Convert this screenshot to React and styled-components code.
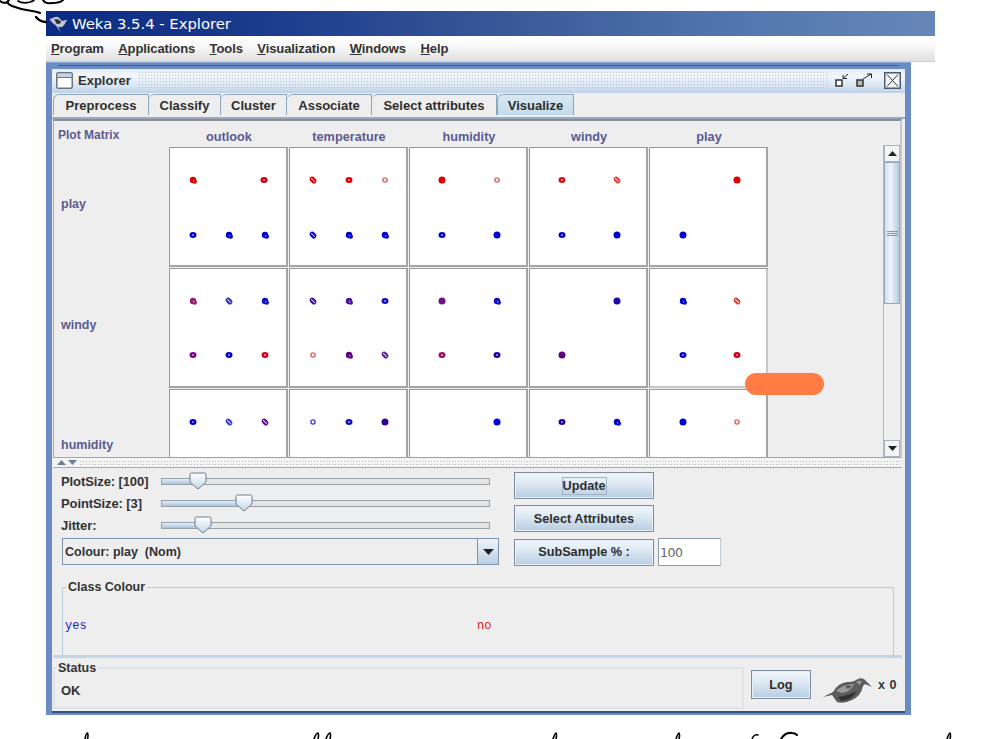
import React from "react";
import styled, { createGlobalStyle } from "styled-components";

const GlobalStyle = createGlobalStyle`
  html, body {
    margin: 0;
    background: #fff;
  }
  * {
    box-sizing: border-box;
  }
`;

const UI_FONT = `"Liberation Sans", Arial, sans-serif`;

const Page = styled.div`
  position: relative;
  width: 1002px;
  height: 739px;
  padding: 11px 0 0 46px;
  overflow: hidden;
  font: bold 13px ${UI_FONT};
  color: #333;
`;

const TitleBar = styled.div`
  display: flex;
  align-items: center;
  gap: 4px;
  width: 889px;
  height: 25px;
  padding-left: 3px;
  background: linear-gradient(to right, #0b2a84 0%, #1c3b8c 25%, #3c5c9a 55%, #4f74ac 75%, #6687b8 100%);
  color: #fff;
  font: 14.8px "DejaVu Sans", sans-serif;
`;

const MenuBar = styled.div`
  display: flex;
  gap: 14.5px;
  align-items: center;
  width: 889px;
  height: 26px;
  padding: 0 0 1px 5px;
  background: linear-gradient(to bottom, #fff 0%, #f8f8f8 40%, #e0e0e0 100%);
  border-bottom: 1px solid #d0d0d0;
  font-size: 13px;
  letter-spacing: -0.1px;
  span u {
    text-underline-offset: 1px;
  }
`;

const Frame = styled.div`
  width: 865px;
  height: 653px;
  padding: 6px 6px 3px 6px;
  background: #6a8bc3;
  border-top: 1px solid #8aa6d0;
  position: relative;
`;

const FrameLine = styled.div`
  height: 1px;
  margin: -4px 6px 3px 6px;
  background: #3f5c8c;
`;

const Inner = styled.div`
  width: 853px;
  height: 644px;
  background: #eee;
  border-bottom: 2px solid #33507e;
`;

const InnerTitle = styled.div`
  display: flex;
  align-items: center;
  height: 24px;
  padding: 0 4px 2px;
  background: linear-gradient(to bottom, #e4ecf7 0%, #f2f6fb 30%, #d6e3f1 75%, #bcd0e5 100%);
  border-radius: 4px 4px 0 0;
`;

const InnerName = styled.span`
  margin: 0 7px 0 5px;
`;

const Bumps = styled.div`
  flex: 1;
  height: 18px;
  background-image: radial-gradient(#b4c2d4 0.8px, transparent 0.9px);
  background-size: 3px 3px;
`;

const WinButtons = styled.div`
  display: flex;
  align-items: center;
  gap: 6px;
  margin-left: 6px;
`;

const TabRow = styled.div`
  display: flex;
  align-items: flex-end;
  height: 26px;
  padding: 0 0 2px 1px;
  border-bottom: 2px solid #95acc6;
`;

const Tab = styled.div`
  display: flex;
  align-items: center;
  justify-content: center;
  width: ${({ $w }) => $w}px;
  height: 21px;
  background: ${({ $active }) => ($active ? "linear-gradient(to bottom, #d8e8f2, #c2dbea)" : "#eee")};
  border: 1px solid #8fa5bc;
  border-bottom: none;
  border-left-width: ${({ $first, $active }) => ($first || $active ? "1px" : "0")};
  border-top-left-radius: 6px;
  color: #2e2e2e;
`;

const Plot = styled.div`
  display: flex;
  height: 339px;
  margin: 0 3px 0 1px;
  background: #eee;
  border-top: 2px solid #8c8c8c;
  border-left: 1px solid #a8a8a8;
  border-right: 2px solid #c8c8c8;
  border-bottom: 1px solid #9ca6b0;
  color: #5b5b8f;
`;

const LabelCol = styled.div`
  width: 115px;
  padding: 7px 0 0 4px;
  overflow: hidden;
`;

const MatrixTitle = styled.div`
  height: 19px;
  font-size: 12px;
  line-height: 14px;
`;

const RowLabel = styled.div`
  height: 120.5px;
  padding: 50px 0 0 3px;
  font-size: 12.5px;
  line-height: 14px;
`;

const Matrix = styled.div`
  width: 600px;
  overflow: hidden;
`;

const HeadRow = styled.div`
  display: grid;
  grid-template-columns: repeat(5, 120px);
  height: 26px;
  padding: 9px 1px 0 0;
  font-size: 12.7px;
  line-height: 14px;
  text-align: center;
`;

const CellGrid = styled.div`
  display: grid;
  grid-template-columns: repeat(5, 119px);
  grid-auto-rows: 120px;
  gap: 1px;
`;

const Cell = styled.div`
  height: 120px;
  background: #fff;
  box-shadow: inset 1px 1px 0 #999, inset -2px -2px 0 ${({ $soft }) => ($soft ? "#c8c8c8" : "#a4a4a4")};
  svg {
    display: block;
  }
`;

const ScrollBar = styled.div`
  display: flex;
  flex-direction: column;
  width: 17px;
  margin: 24px 0 0 auto;
  background: #eee;
  border-left: 1px solid #b0b8c0;
`;

const ScrollBtn = styled.div`
  display: flex;
  align-items: center;
  justify-content: center;
  height: 17px;
  background: #f4f4f4;
  border: 1px solid #aab4c0;
`;

const ScrollThumb = styled.div`
  display: flex;
  flex-direction: column;
  gap: 1px;
  align-items: center;
  justify-content: center;
  height: 142px;
  background: linear-gradient(to right, #d2e0f0, #eef4fa 40%, #b4cbe2);
  border: 1px solid #8ea8c6;
  i {
    display: block;
    width: 11px;
    height: 1px;
    background: #8098b8;
  }
`;

const ScrollTrack = styled.div`
  flex: 1;
`;

const Splitter = styled.div`
  display: flex;
  align-items: center;
  gap: 2px;
  height: 10px;
  margin: 0 3px 0 1px;
  padding-left: 4px;
  background-color: #f4f4f4;
  border-bottom: 1px solid #a0aab4;
`;

const SplitDots = styled.div`
  flex: 1;
  height: 6px;
  background-image: radial-gradient(#bbb 0.7px, transparent 0.8px);
  background-size: 3px 3px;
`;

const Controls = styled.div`
  height: 190px;
  margin: 0 3px 0 1px;
  padding: 0 8px;
  border-bottom: 3px solid #c2d6e8;
`;

const ControlTop = styled.div`
  display: flex;
  gap: 15px;
`;

const SliderCol = styled.div`
  width: 438px;
  padding-top: 2px;
`;

const SliderRow = styled.div`
  display: flex;
  align-items: center;
  height: 22px;
`;

const SliderLabel = styled.span`
  width: 100px;
  font-size: 13px;
  letter-spacing: -0.1px;
`;

const Track = styled.div`
  position: relative;
  width: 329px;
  height: 7px;
  background: #e4e4e4;
  border: 1px solid #98a0a8;
`;

const TrackFill = styled.div`
  height: 100%;
  background: linear-gradient(to bottom, #e4eef8, #a8c4de);
`;

const Thumb = styled.svg`
  position: absolute;
  top: -7px;
  left: ${({ $at }) => $at - 10}px;
`;

const Combo = styled.div`
  display: flex;
  align-items: center;
  width: 437px;
  height: 27px;
  margin: 2px 0 0 1px;
  padding-left: 2px;
  border: 1px solid #7f94aa;
  border-width: 1px 0 1px 1px;
  background: #eee;
  font-size: 12.5px;
  white-space: pre;
`;

const ComboArrow = styled.div`
  display: flex;
  align-items: center;
  justify-content: center;
  width: 22px;
  height: 27px;
  margin-left: auto;
  background: linear-gradient(to bottom, #f0f5fa, #b8cfe4);
  border: 1px solid #7f94aa;
`;

const ButtonCol = styled.div`
  display: flex;
  flex-direction: column;
  gap: 6px;
  padding-top: 4px;
`;

const ButtonRow = styled.div`
  display: flex;
  align-items: center;
  gap: 4px;
`;

const Button = styled.div`
  display: flex;
  align-items: center;
  justify-content: center;
  width: ${({ $w }) => $w || 140}px;
  height: ${({ $h }) => $h || 27}px;
  border: 1px solid #7e8e9e;
  box-shadow: inset 0 0 0 1px #e8eef5;
  background: linear-gradient(to bottom, #f2f6fb 0%, #dfe9f3 40%, #b6cde2 100%);
  font-size: 12.7px;
  color: #2e2e2e;
`;

const Focus = styled.span`
  padding: 1px 0;
  border: 1px solid #a0b2c4;
`;

const NumberBox = styled.div`
  width: 63px;
  height: 28px;
  padding: 6px 0 0 1px;
  background: #fff;
  border: 1px solid #8a9aa8;
  border-right-color: #c0c8d0;
  font: 12.5px "DejaVu Sans", sans-serif;
  letter-spacing: -0.4px;
  color: #666;
`;

const ClassBox = styled.fieldset`
  height: 78px;
  width: 832px;
  margin: 14px 0 0 1px;
  padding: 0 0 0 2px;
  border: 1px solid #bccbda;
  border-bottom: none;
  overflow: hidden;
`;

const Legend = styled.legend`
  margin-left: ${({ $shift }) => $shift}px;
  padding: 0 2px;
  line-height: 14px;
  font-size: 12.5px;
  font-weight: bold;
`;

const ClassRow = styled.div`
  display: grid;
  grid-template-columns: 412px 1fr;
  padding-top: 25px;
  font: 12px/14px "Liberation Mono", monospace;
`;

const ClassName = styled.span`
  color: ${({ $color }) => $color};
`;

const StatusBar = styled.div`
  display: flex;
  align-items: flex-start;
  height: 53px;
  padding: 3px 0 0 1px;
`;

const StatusBox = styled.fieldset`
  width: 691px;
  height: 48px;
  margin: 0;
  padding: 8px 0 0 6px;
  border: 2px solid #dde3e8;
`;

const LogButton = styled(Button)`
  margin: 9px 0 0 7px;
`;

const BirdWrap = styled.div`
  margin: 17px 0 0 12px;
  line-height: 0;
`;

const Count = styled.span`
  margin: 17px 0 0 6px;
  font-size: 12.5px;
  letter-spacing: 0.5px;
`;

const Smudge = styled.div`
  position: absolute;
  left: 745px;
  top: 373px;
  width: 79px;
  height: 22px;
  border-radius: 11px;
  background: #ff7c45;
`;

const Ink = styled.svg`
  position: absolute;
  left: 0;
  top: 0;
  pointer-events: none;
`;

const R = "#e00000";
const B = "#0000d0";

// each dot: x, y, colour, kind
const ROWS = [
  [
    [[24, 33, R, "b"], [95, 33, "#d00010", "e"], [24, 88, B, "e"], [60, 88, B, "b"], [96, 88, B, "b"]],
    [[24, 33, R, "s"], [60, 33, R, "e"], [96, 33, "#e06060", "o"], [24, 88, B, "s"], [60, 88, B, "b"], [96, 88, B, "b"]],
    [[33, 33, R, "f"], [88, 33, "#e06060", "o"], [33, 88, B, "e"], [88, 88, B, "f"]],
    [[33, 33, "#d01020", "e"], [88, 33, "#e04040", "s"], [33, 88, B, "e"], [88, 88, B, "f"]],
    [[88, 33, R, "f"], [34, 88, B, "f"]],
  ],
  [
    [[24, 33, "#902070", "b"], [60, 33, "#3030c0", "s"], [96, 33, "#1010c0", "b"], [24, 87, "#800090", "e"], [60, 87, B, "e"], [96, 87, "#d00020", "e"]],
    [[24, 33, "#4010a0", "s"], [60, 33, "#5010a0", "b"], [96, 33, "#1010c0", "e"], [24, 87, "#e06060", "o"], [60, 87, "#600080", "b"], [96, 87, "#6020a0", "s"]],
    [[33, 33, "#701090", "f"], [88, 33, "#1010c0", "b"], [33, 87, "#a01060", "e"], [88, 87, "#2000a0", "e"]],
    [[88, 33, "#2000b0", "f"], [33, 87, "#600080", "f"]],
    [[34, 33, B, "b"], [88, 33, "#e04040", "s"], [34, 87, B, "e"], [88, 87, "#d00020", "e"]],
  ],
  [
    [[24, 33, B, "e"], [60, 33, "#4040d0", "s"], [96, 33, "#601090", "s"]],
    [[24, 33, "#4040d0", "o"], [60, 33, "#1010c0", "e"], [96, 33, "#300090", "f"]],
    [[88, 33, B, "f"]],
    [[33, 33, "#2000a0", "e"], [88, 33, B, "b"]],
    [[34, 33, B, "f"], [88, 33, "#e06060", "o"]],
  ],
];

const Dot = ({ x, y, color, kind }) => {
  if (kind === "o") return <circle cx={x} cy={y} r="2.1" fill="#fff" stroke={color} strokeWidth="1.4" />;
  if (kind === "f") return <circle cx={x} cy={y} r="3.5" fill={color} />;
  if (kind === "s")
    return (
      <g transform={`rotate(45 ${x} ${y})`}>
        <rect x={x - 3.8} y={y - 2.6} width="7.6" height="5.2" rx="2.6" fill={color} />
        <rect x={x - 2.6} y={y - 0.4} width="5.2" height="0.8" fill="#fff" />
      </g>
    );
  if (kind === "e")
    return (
      <g>
        <ellipse cx={x} cy={y} rx="3.5" ry="3" fill={color} />
        <circle cx={x} cy={y} r="0.8" fill="#fff" />
      </g>
    );
  return (
    <g>
      <circle cx={x} cy={y} r="3.2" fill={color} />
      <circle cx={x + 1.8} cy={y + 1.6} r="2.2" fill={color} />
      <circle cx={x + 0.8} cy={y + 0.8} r="0.6" fill="#fff" />
    </g>
  );
};

const SlideBar = ({ label, at }) => (
  <SliderRow>
    <SliderLabel>{label}</SliderLabel>
    <Track>
      <TrackFill style={{ width: at }} />
      <Thumb $at={at} width="18" height="18" viewBox="0 0 18 18">
        <path
          d="M2.5 1 H15.5 Q17 1 17 2.5 V10 L9 17 L1 10 V2.5 Q1 1 2.5 1 Z"
          fill="url(#thumbFill)"
          stroke="#6c7c8c"
          strokeWidth="1"
        />
        <defs>
          <linearGradient id="thumbFill" x1="0" y1="0" x2="0" y2="1">
            <stop offset="0" stopColor="#fff" />
            <stop offset="1" stopColor="#c4d8ea" />
          </linearGradient>
        </defs>
      </Thumb>
    </Track>
  </SliderRow>
);

const Arrow = ({ down, w = 9, h = 5, color = "#222" }) => (
  <svg width={w} height={h} viewBox="0 0 9 5">
    <path d={down ? "M0 0 H9 L4.5 5 Z" : "M0 5 H9 L4.5 0 Z"} fill={color} />
  </svg>
);

const BirdIcon = () => (
  <svg width="49" height="25" viewBox="0 0 49 25">
    <path
      d="M0 19 L10 14 Q15 5 24 4 Q30 4 33 2 Q37 -1 41 1 L45 5 L49 9 L42 6 L40 8 Q38 18 29 22 Q21 26 14 24 Q11 20 9 17 L0 19 Z"
      fill="#5c5c5c"
    />
    <path d="M13 13 Q20 6 31 6 Q29 13 19 15 Z" fill="#9a9a9a" />
    <path d="M22 8 Q26 7 29 8 L25 11 Z" fill="#555" />
    <path d="M33 4 Q36 2 39 3 L37 7 Z" fill="#999" />
    <path d="M15 19 Q24 18 34 13 Q29 22 18 23 Z" fill="#303030" />
  </svg>
);

const App = () => {
  return (
    <Page>
      <GlobalStyle />
      <TitleBar>
        <svg width="19" height="16" viewBox="0 0 50 25" preserveAspectRatio="none">
          <path d="M1 5 L14 2 Q24 -1 34 8 L48 6 L40 14 Q32 20 24 16 L30 25 L18 15 Q10 12 1 5 Z" fill="#bfc6d4" />
          <path d="M14 5 Q24 3 32 9 Q28 14 20 12 Z" fill="#333" />
        </svg>
        Weka 3.5.4 - Explorer
      </TitleBar>
      <MenuBar>
        <span><u>P</u>rogram</span>
        <span><u>A</u>pplications</span>
        <span><u>T</u>ools</span>
        <span><u>V</u>isualization</span>
        <span><u>W</u>indows</span>
        <span><u>H</u>elp</span>
      </MenuBar>
      <Frame>
        <FrameLine />
        <Inner>
          <InnerTitle>
            <svg width="17" height="17" viewBox="0 0 17 17">
              <rect x="0.75" y="0.75" width="15.5" height="15.5" rx="1.5" fill="#fff" stroke="#6a7484" strokeWidth="1.5" />
              <rect x="2" y="2" width="13" height="3" fill="#c8d4e4" />
              <path d="M1 5.5 H16" stroke="#6a7484" />
            </svg>
            <InnerName>Explorer</InnerName>
            <Bumps />
            <WinButtons>
              <svg width="15" height="16" viewBox="0 0 15 16">
                <rect x="1" y="8" width="6" height="6" fill="#fff" stroke="#333" strokeWidth="1.5" />
                <path d="M13 2 L8 6.5 M8 3 V6.5 H12" fill="none" stroke="#222" />
              </svg>
              <svg width="17" height="16" viewBox="0 0 17 16">
                <rect x="1" y="8" width="6" height="6" fill="#bbb" stroke="#333" strokeWidth="1.5" />
                <path d="M7 7 L15 2 M11 2 H15.5 V6" fill="none" stroke="#222" />
              </svg>
              <svg width="17" height="17" viewBox="0 0 17 17" style={{ marginLeft: 5 }}>
                <rect x="0.75" y="0.75" width="15.5" height="15.5" fill="#f2f5f9" stroke="#4c5a6c" strokeWidth="1.5" />
                <path d="M3 2.5 L14 14.5 M14 2.5 L3 14.5" stroke="#333" />
              </svg>
            </WinButtons>
          </InnerTitle>
          <TabRow>
            <Tab $w={96} $first>Preprocess</Tab>
            <Tab $w={72}>Classify</Tab>
            <Tab $w={66}>Cluster</Tab>
            <Tab $w={85}>Associate</Tab>
            <Tab $w={125}>Select attributes</Tab>
            <Tab $w={77} $active>Visualize</Tab>
          </TabRow>
          <Plot>
            <LabelCol>
              <MatrixTitle>Plot Matrix</MatrixTitle>
              <RowLabel>play</RowLabel>
              <RowLabel>windy</RowLabel>
              <RowLabel>humidity</RowLabel>
            </LabelCol>
            <Matrix>
              <HeadRow>
                <span>outlook</span>
                <span>temperature</span>
                <span>humidity</span>
                <span>windy</span>
                <span>play</span>
              </HeadRow>
              <CellGrid>
                {ROWS.map((row, r) =>
                  row.map((dots, c) => (
                    <Cell key={`${r}-${c}`} $soft={r === 1 && c === 4}>
                      <svg width="119" height="120" viewBox="0 0 119 120">
                        {dots.map(([x, y, color, kind], i) => (
                          <Dot key={i} x={x} y={y} color={color} kind={kind} />
                        ))}
                      </svg>
                    </Cell>
                  ))
                )}
              </CellGrid>
            </Matrix>
            <ScrollBar>
              <ScrollBtn><Arrow w={9} h={5} /></ScrollBtn>
              <ScrollThumb><i /><i /><i /></ScrollThumb>
              <ScrollTrack />
              <ScrollBtn><Arrow down w={9} h={5} /></ScrollBtn>
            </ScrollBar>
          </Plot>
          <Splitter>
            <Arrow w={9} h={5} color="#6b7f96" />
            <Arrow down w={9} h={5} color="#6b7f96" />
            <SplitDots />
          </Splitter>
          <Controls>
            <ControlTop>
              <SliderCol>
                <SlideBar label="PlotSize: [100]" at={37} />
                <SlideBar label="PointSize: [3]" at={83} />
                <SlideBar label="Jitter:" at={42} />
                <Combo>
                  Colour: play  (Nom)
                  <ComboArrow><Arrow down w={11} h={6} /></ComboArrow>
                </Combo>
              </SliderCol>
              <ButtonCol>
                <Button><Focus>Update</Focus></Button>
                <Button>Select Attributes</Button>
                <ButtonRow>
                  <Button>SubSample % :</Button>
                  <NumberBox>100</NumberBox>
                </ButtonRow>
              </ButtonCol>
            </ControlTop>
            <ClassBox>
              <Legend $shift={1}>Class Colour</Legend>
              <ClassRow>
                <ClassName $color="#1a1ac8">yes</ClassName>
                <ClassName $color="#e01818">no</ClassName>
              </ClassRow>
            </ClassBox>
          </Controls>
          <StatusBar>
            <StatusBox>
              <Legend $shift={-5}>Status</Legend>
              OK
            </StatusBox>
            <LogButton $w={60} $h={29}>Log</LogButton>
            <BirdWrap><BirdIcon /></BirdWrap>
            <Count>x 0</Count>
          </StatusBar>
        </Inner>
      </Frame>
      <Smudge />
      <Ink width="1002" height="739" viewBox="0 0 1002 739" fill="none" stroke="#000" strokeLinecap="round">
        <path d="M0 1 Q4 4 8 2" strokeWidth="2" />
        <path d="M9 0 Q5 3 12 6 Q22 10 32 11 Q38 12 40 13" strokeWidth="2" />
        <path d="M18 1 Q23 4 30 2 Q33 1 34 0" strokeWidth="1.8" />
        <path d="M43 0 Q45 4 52 3 Q60 3 63 0" strokeWidth="2" />
        <path d="M36 17 Q40 22 46 22" strokeWidth="2.4" />
        <path d="M85 739 Q86 733 87.5 733 Q88.5 735 87.5 739" strokeWidth="1.6" />
        <path d="M314 739 Q316 733 318 733 Q319 735 318 739" strokeWidth="1.6" />
        <path d="M326 739 Q328 733 330 733 Q331 735 330 739" strokeWidth="1.6" />
        <path d="M553 739 Q555 733 556 733 Q557 735 556 739" strokeWidth="1.6" />
        <path d="M676 739 Q678 733 679 733 Q680 735 679 739" strokeWidth="1.6" />
        <path d="M752 739 Q754 734 758 735" strokeWidth="1.4" />
        <path d="M781 739 Q785 732 792 733 Q795 733 797 735" strokeWidth="2" />
        <path d="M947 739 Q949 733 950 733 Q951 735 950 739" strokeWidth="1.6" />
      </Ink>
    </Page>
  );
};

export default App;
